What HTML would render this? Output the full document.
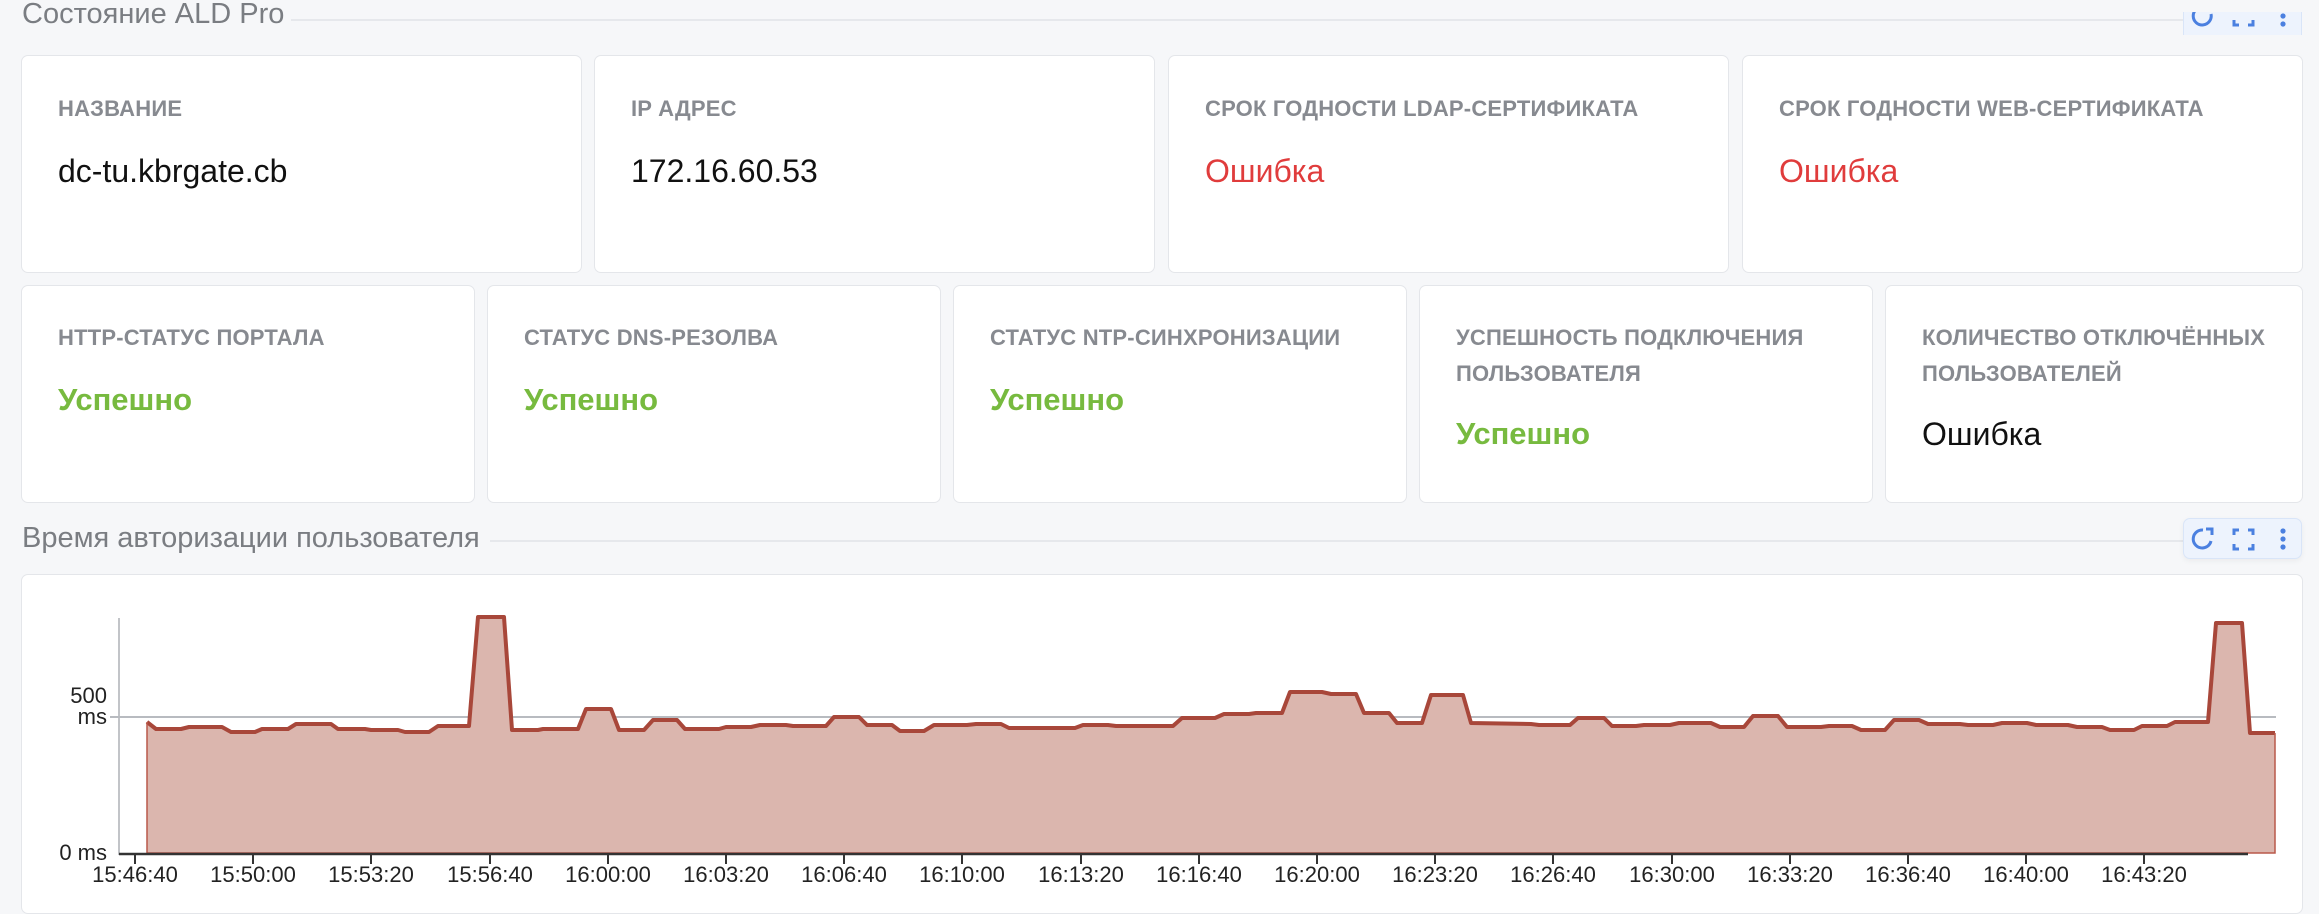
<!DOCTYPE html>
<html><head><meta charset="utf-8"><style>
*{margin:0;padding:0;box-sizing:border-box}
body{width:2319px;height:892px;background:#f6f7f9;position:relative;overflow:hidden;font-family:"Liberation Sans",sans-serif}
.card{position:absolute;background:#fff;border:1.5px solid #e4e6ea;border-radius:7px}
.lbl{position:absolute;left:36px;font-size:22px;font-weight:bold;color:#878a90;line-height:36px;letter-spacing:0.2px}
.val{position:absolute;left:36px;font-size:32px;line-height:36px}
.red{color:#e03c3c}.grn{color:#77ba3f;font-weight:bold;font-size:31px}.blk{color:#111}
.ttl{position:absolute;left:22px;font-size:29px;color:#7a7d82}
.hl{position:absolute;height:2px;background:#e6e8ec}
.tb{position:absolute;left:2183px;width:119px;background:#edf3fd;border:1.5px solid #d9e5f8;border-radius:7px;box-shadow:0 2px 6px rgba(0,0,0,0.05)}
</style></head><body>
<div class="ttl" style="top:-2px">Состояние ALD Pro</div>
<div class="hl" style="left:291px;right:17px;top:19px"></div>
<div style="position:absolute;left:2183px;top:12px;width:119px;height:23px;overflow:hidden">
<div class="tb" style="left:0;top:-16px;height:50px">
<svg width="119" height="50" style="position:absolute;left:-1px;top:-1px"><g fill="none" stroke="#4b80e0" stroke-width="3"><path d="M28 18 A9 9 0 1 1 20 11"/><path d="M24 10 L29 10 L29 15" /><path d="M51 14v-5h5M65 9h5v5M70 24v5h-5M56 29h-5v-5"/></g><g fill="#4b80e0"><circle cx="100" cy="12" r="2.6"/><circle cx="100" cy="20" r="2.6"/><circle cx="100" cy="28" r="2.6"/></g></svg>
</div></div>

<div class="card" style="left:21px;top:55px;width:561px;height:218px"><div class="lbl" style="top:35px">НАЗВАНИЕ</div><div class="val blk" style="top:97px">dc-tu.kbrgate.cb</div></div>
<div class="card" style="left:594px;top:55px;width:561px;height:218px"><div class="lbl" style="top:35px">IP АДРЕС</div><div class="val blk" style="top:97px">172.16.60.53</div></div>
<div class="card" style="left:1168px;top:55px;width:561px;height:218px"><div class="lbl" style="top:35px">СРОК ГОДНОСТИ LDAP-СЕРТИФИКАТА</div><div class="val red" style="top:97px">Ошибка</div></div>
<div class="card" style="left:1742px;top:55px;width:561px;height:218px"><div class="lbl" style="top:35px">СРОК ГОДНОСТИ WEB-СЕРТИФИКАТА</div><div class="val red" style="top:97px">Ошибка</div></div>

<div class="card" style="left:21px;top:285px;width:454px;height:218px"><div class="lbl" style="top:34px">HTTP-СТАТУС ПОРТАЛА</div><div class="val grn" style="top:96px">Успешно</div></div>
<div class="card" style="left:487px;top:285px;width:454px;height:218px"><div class="lbl" style="top:34px">СТАТУС DNS-РЕЗОЛВА</div><div class="val grn" style="top:96px">Успешно</div></div>
<div class="card" style="left:953px;top:285px;width:454px;height:218px"><div class="lbl" style="top:34px">СТАТУС NTP-СИНХРОНИЗАЦИИ</div><div class="val grn" style="top:96px">Успешно</div></div>
<div class="card" style="left:1419px;top:285px;width:454px;height:218px"><div class="lbl" style="top:34px">УСПЕШНОСТЬ ПОДКЛЮЧЕНИЯ<br>ПОЛЬЗОВАТЕЛЯ</div><div class="val grn" style="top:130px">Успешно</div></div>
<div class="card" style="left:1885px;top:285px;width:418px;height:218px"><div class="lbl" style="top:34px">КОЛИЧЕСТВО ОТКЛЮЧЁННЫХ<br>ПОЛЬЗОВАТЕЛЕЙ</div><div class="val blk" style="top:130px">Ошибка</div></div>

<div class="ttl" style="top:522px">Время авторизации пользователя</div>
<div class="hl" style="left:490px;width:1693px;top:540px"></div>
<div class="tb" style="top:518px;height:41px">
<svg width="119" height="41" style="position:absolute;left:-1px;top:-1px"><g fill="none" stroke="#4b80e0" stroke-width="3"><path d="M28 23 A9 9 0 1 1 20 12"/><path d="M23 11 L29 11 L29 17"/><path d="M51 17v-5h5M65 12h5v5M70 26v5h-5M56 31h-5v-5"/></g><g fill="#4b80e0"><circle cx="100" cy="13" r="2.6"/><circle cx="100" cy="21" r="2.6"/><circle cx="100" cy="29" r="2.6"/></g></svg>
</div>

<div class="card" style="left:21px;top:574px;width:2282px;height:340px"></div>
<svg width="2319" height="892" style="position:absolute;left:0;top:0" font-family="Liberation Sans, sans-serif" font-size="22" fill="#222">
<line x1="119" y1="618" x2="119" y2="855" stroke="#aeb1b6" stroke-width="1.5"/>
<line x1="110" y1="717" x2="2276" y2="717" stroke="#b8bbc0" stroke-width="2"/>
<polygon fill="#dbb6ae" points="147,853 147,722 156,729 181,729 189,727 222,727 231,732 255,732 262,729 288,729 296,724 331,724 338,729 365,729 371,730 398,730 405,732 429,732 438,726 469,726 478,617 504,617 512,730 538,730 543,729 578,729 586,709 611,709 619,730 644,730 653,720 677,720 685,729 719,729 726,727 751,727 760,725 786,725 793,726 826,726 834,717 859,717 867,725 892,725 900,731 924,731 934,725 967,725 976,724 1001,724 1009,728 1075,728 1083,725 1108,725 1116,726 1173,726 1182,718 1215,718 1224,714 1249,714 1256,713 1282,713 1290,692 1322,692 1331,694 1356,694 1364,713 1389,713 1397,723 1422,723 1431,695 1463,695 1471,723 1531,724 1539,725 1570,725 1578,718 1604,718 1612,726 1636,726 1644,725 1670,725 1679,723 1711,723 1720,727 1744,727 1753,716 1778,716 1787,727 1821,727 1829,726 1852,726 1861,730 1885,730 1894,720 1919,720 1928,724 1960,724 1968,725 1993,725 2002,723 2027,723 2036,725 2068,725 2077,727 2102,727 2110,730 2134,730 2142,726 2167,726 2175,722 2208,722 2216,623 2242,623 2250,733 2275,733 2275,853"/>
<polyline fill="none" stroke="#a8473a" stroke-width="4" stroke-linejoin="round" points="147,722 156,729 181,729 189,727 222,727 231,732 255,732 262,729 288,729 296,724 331,724 338,729 365,729 371,730 398,730 405,732 429,732 438,726 469,726 478,617 504,617 512,730 538,730 543,729 578,729 586,709 611,709 619,730 644,730 653,720 677,720 685,729 719,729 726,727 751,727 760,725 786,725 793,726 826,726 834,717 859,717 867,725 892,725 900,731 924,731 934,725 967,725 976,724 1001,724 1009,728 1075,728 1083,725 1108,725 1116,726 1173,726 1182,718 1215,718 1224,714 1249,714 1256,713 1282,713 1290,692 1322,692 1331,694 1356,694 1364,713 1389,713 1397,723 1422,723 1431,695 1463,695 1471,723 1531,724 1539,725 1570,725 1578,718 1604,718 1612,726 1636,726 1644,725 1670,725 1679,723 1711,723 1720,727 1744,727 1753,716 1778,716 1787,727 1821,727 1829,726 1852,726 1861,730 1885,730 1894,720 1919,720 1928,724 1960,724 1968,725 1993,725 2002,723 2027,723 2036,725 2068,725 2077,727 2102,727 2110,730 2134,730 2142,726 2167,726 2175,722 2208,722 2216,623 2242,623 2250,733 2275,733"/>
<polyline fill="none" stroke="#b9584a" stroke-width="1.5" points="147,722 147,853 2275,853 2275,733"/>
<line x1="119" y1="854" x2="2248" y2="854" stroke="#333" stroke-width="2.5"/>
<text x="107" y="703" text-anchor="end">500</text>
<text x="107" y="724" text-anchor="end">ms</text>
<text x="107" y="860" text-anchor="end">0 ms</text>
<g stroke="#333" stroke-width="2"><line x1="135" y1="855" x2="135" y2="864"/><line x1="253" y1="855" x2="253" y2="864"/><line x1="371" y1="855" x2="371" y2="864"/><line x1="490" y1="855" x2="490" y2="864"/><line x1="608" y1="855" x2="608" y2="864"/><line x1="726" y1="855" x2="726" y2="864"/><line x1="844" y1="855" x2="844" y2="864"/><line x1="962" y1="855" x2="962" y2="864"/><line x1="1081" y1="855" x2="1081" y2="864"/><line x1="1199" y1="855" x2="1199" y2="864"/><line x1="1317" y1="855" x2="1317" y2="864"/><line x1="1435" y1="855" x2="1435" y2="864"/><line x1="1553" y1="855" x2="1553" y2="864"/><line x1="1672" y1="855" x2="1672" y2="864"/><line x1="1790" y1="855" x2="1790" y2="864"/><line x1="1908" y1="855" x2="1908" y2="864"/><line x1="2026" y1="855" x2="2026" y2="864"/><line x1="2144" y1="855" x2="2144" y2="864"/></g>
<g text-anchor="middle">
<text x="135" y="882">15:46:40</text><text x="253" y="882">15:50:00</text><text x="371" y="882">15:53:20</text><text x="490" y="882">15:56:40</text><text x="608" y="882">16:00:00</text><text x="726" y="882">16:03:20</text><text x="844" y="882">16:06:40</text><text x="962" y="882">16:10:00</text><text x="1081" y="882">16:13:20</text><text x="1199" y="882">16:16:40</text><text x="1317" y="882">16:20:00</text><text x="1435" y="882">16:23:20</text><text x="1553" y="882">16:26:40</text><text x="1672" y="882">16:30:00</text><text x="1790" y="882">16:33:20</text><text x="1908" y="882">16:36:40</text><text x="2026" y="882">16:40:00</text><text x="2144" y="882">16:43:20</text>
</g>
</svg>
</body></html>
